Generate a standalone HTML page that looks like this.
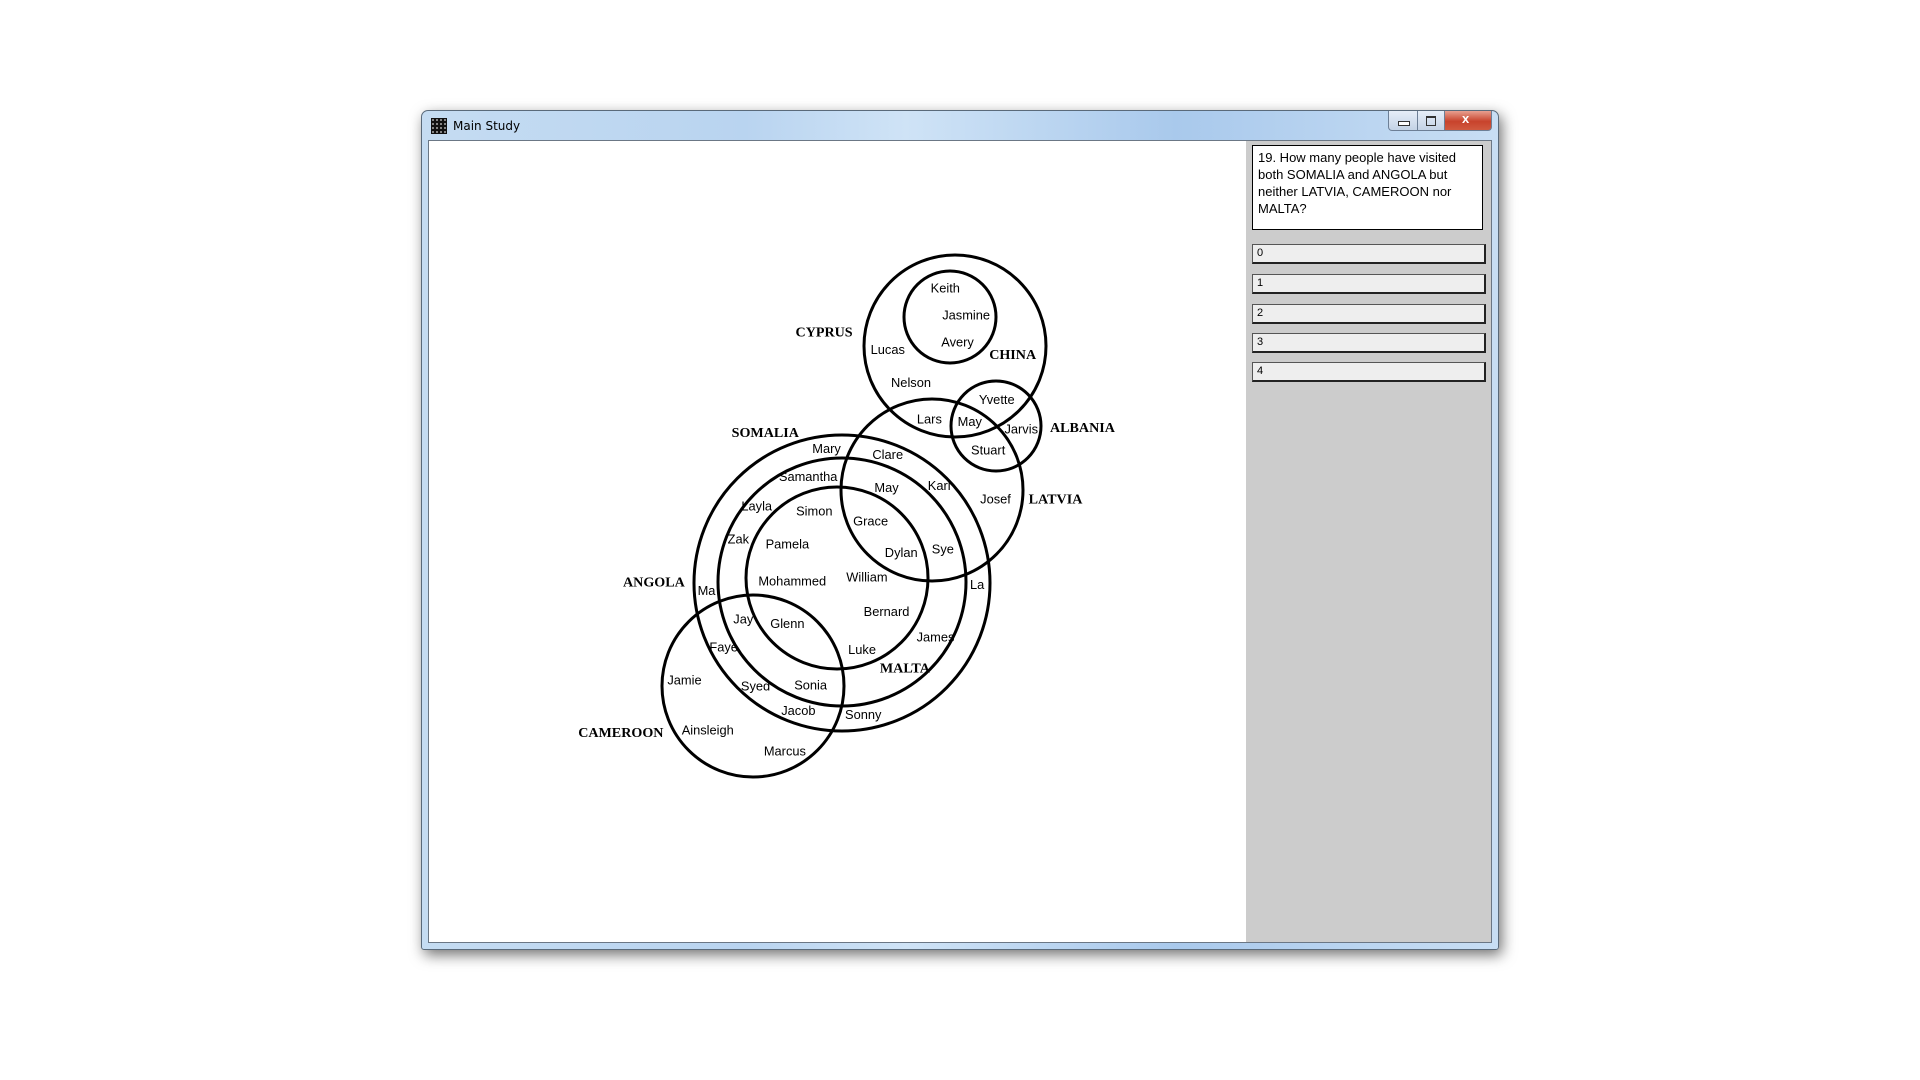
<!DOCTYPE html>
<html><head><meta charset="utf-8"><style>
body{margin:0;width:1920px;height:1080px;background:#fff;position:relative;overflow:hidden;font-family:"Liberation Sans",Arial,sans-serif}
.win{position:absolute;left:421px;top:110px;width:1076px;height:838px;border-radius:7px 7px 3px 3px;background:linear-gradient(90deg,#c5dcf2 0%,#b9d4f0 30%,#cfe3f6 45%,#a9c9ec 70%,#c8def4 100%);border:1px solid #5a6a7a;box-shadow:3px 5px 14px rgba(0,0,0,.55)}
.title{position:absolute;left:31px;top:8px;font-size:12px;color:#000;font-family:"DejaVu Sans","Liberation Sans",sans-serif}
.icon{position:absolute;left:9px;top:7px;width:16px;height:16px;background:#111;background-image:radial-gradient(#aaa 1px,transparent 1px);background-size:4px 4px}
.client{position:absolute;left:6px;top:29px;width:1062px;height:801px;background:#fff;border:1px solid #6b7785}
.gray{position:absolute;left:817px;top:0;width:245px;height:801px;background:#cccccc}
.q{position:absolute;left:6px;top:4px;width:224px;height:80px;background:#fff;border:1px solid #000;font-size:13px;line-height:17px;padding:3px 0 0 5px;color:#000}
.b{position:absolute;left:6px;width:227px;height:17px;background:#eeeeee;border:1px solid #555;border-right:2px solid #222;border-bottom:2px solid #222;font-size:11px;line-height:17px;padding-left:4px}
.tb{position:absolute;top:0;height:19px;border:1px solid #6d7f96;border-top:none;background:linear-gradient(#e6eef8,#c4d3e6)}
</style></head><body>
<div class="win">
<div class="icon"></div><div class="title">Main Study</div>
<div class="tb" style="left:966px;width:28px;border-radius:0 0 0 4px"><div style="position:absolute;left:9px;top:10px;width:10px;height:3px;border:1px solid #333;background:#fff"></div></div>
<div class="tb" style="left:995px;width:26px"><div style="position:absolute;left:8px;top:5px;width:8px;height:7px;border:1px solid #333;border-top-width:2px"></div></div>
<div class="tb" style="left:1022px;width:46px;border-radius:0 0 4px 0;background:linear-gradient(#e8a090,#c8432c 55%,#d05a40)"><div style="position:absolute;left:17px;top:0;color:#fff;font-weight:bold;font-size:13px">x</div></div>
<div class="client">
<div class="gray">
<div class="q">19. How many people have visited both SOMALIA and ANGOLA but neither LATVIA, CAMEROON nor MALTA?</div>
<div class="b" style="top:103px">0</div>
<div class="b" style="top:133px">1</div>
<div class="b" style="top:163px">2</div>
<div class="b" style="top:192px">3</div>
<div class="b" style="top:221px">4</div>
</div></div></div>
<svg style="position:absolute;left:0;top:0" width="1920" height="1080" viewBox="0 0 1920 1080">
<g fill="none" stroke="#000" stroke-width="3">
<circle cx="955" cy="346" r="91"/>
<circle cx="950" cy="317" r="46"/>
<circle cx="996" cy="426" r="45"/>
<circle cx="932" cy="490" r="91"/>
<circle cx="842" cy="583" r="148"/>
<circle cx="842" cy="582" r="124"/>
<circle cx="837" cy="578" r="91"/>
<circle cx="753" cy="686" r="91"/>
</g>
<g transform="scale(1.2245)" text-anchor="middle" font-family="Liberation Sans, Arial, sans-serif" font-size="10.5" fill="#000">
<text x="772" y="239">Keith</text><text x="789" y="261">Jasmine</text><text x="782" y="283">Avery</text><text x="725" y="289">Lucas</text><text x="744" y="316">Nelson</text><text x="759" y="346">Lars</text><text x="792" y="348">May</text><text x="814" y="330">Yvette</text><text x="834" y="354">Jarvis</text><text x="807" y="371">Stuart</text>
<text x="675" y="370">Mary</text><text x="725" y="375">Clare</text><text x="660" y="393">Samantha</text><text x="724" y="402">May</text><text x="767" y="400">Karl</text><text x="813" y="411">Josef</text><text x="618" y="417">Layla</text><text x="665" y="421">Simon</text><text x="711" y="429">Grace</text><text x="603" y="444">Zak</text><text x="643" y="448">Pamela</text><text x="736" y="455">Dylan</text><text x="770" y="452">Sye</text><text x="577" y="486">Ma</text><text x="647" y="478">Mohammed</text><text x="708" y="475">William</text><text x="798" y="481">La</text><text x="724" y="503">Bernard</text><text x="607" y="509">Jay</text><text x="643" y="513">Glenn</text><text x="764" y="524">James</text><text x="591" y="532">Faye</text><text x="704" y="534">Luke</text><text x="559" y="559">Jamie</text><text x="617" y="564">Syed</text><text x="662" y="563">Sonia</text><text x="652" y="584">Jacob</text><text x="705" y="587">Sonny</text><text x="578" y="600">Ainsleigh</text><text x="641" y="617">Marcus</text>
<g font-family="Liberation Serif, Times New Roman, serif" font-weight="bold" font-size="11.5">
<text x="673" y="275">CYPRUS</text><text x="827" y="293">CHINA</text><text x="884" y="353">ALBANIA</text><text x="625" y="357">SOMALIA</text><text x="862" y="411">LATVIA</text><text x="534" y="479">ANGOLA</text><text x="739" y="549">MALTA</text><text x="507" y="602">CAMEROON</text>
</g></g>
</svg>
</body></html>
